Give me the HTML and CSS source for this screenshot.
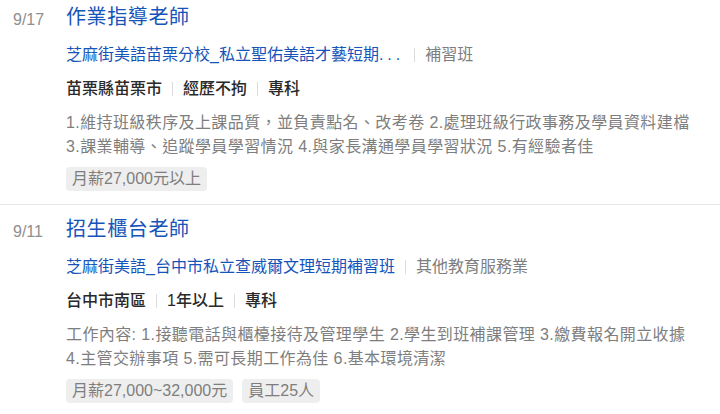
FILE: index.html
```html
<!DOCTYPE html>
<html lang="zh-Hant">
<head>
<meta charset="utf-8">
<title>職缺列表</title>
<link rel="stylesheet" href="styles.css">
</head>
<body>
<div class="list">
  <article class="job">
    <div class="date">9/17</div>
    <div class="body">
      <h2 class="title">作業指導老師</h2>
      <div class="company">
        <span class="cname">芝麻街美語苗栗分校_私立聖佑美語才藝短期<span class="dots">...</span></span>
        <span class="industry">補習班</span>
      </div>
      <ul class="info">
        <li>苗栗縣苗栗市</li>
        <li>經歷不拘</li>
        <li>專科</li>
      </ul>
      <p class="desc">1.維持班級秩序及上課品質，並負責點名、改考卷 2.處理班級行政事務及學員資料建檔 3.課業輔導、追蹤學員學習情況 4.與家長溝通學員學習狀況 5.有經驗者佳</p>
      <div class="tags">
        <span class="tag">月薪27,000元以上</span>
      </div>
    </div>
  </article>
  <article class="job">
    <div class="date">9/11</div>
    <div class="body">
      <h2 class="title">招生櫃台老師</h2>
      <div class="company">
        <span class="cname">芝麻街美語_台中市私立查威爾文理短期補習班</span>
        <span class="industry">其他教育服務業</span>
      </div>
      <ul class="info">
        <li>台中市南區</li>
        <li>1年以上</li>
        <li>專科</li>
      </ul>
      <p class="desc">工作內容: 1.接聽電話與櫃檯接待及管理學生 2.學生到班補課管理 3.繳費報名開立收據 4.主管交辦事項 5.需可長期工作為佳 6.基本環境清潔</p>
      <div class="tags">
        <span class="tag">月薪27,000~32,000元</span>
        <span class="tag">員工25人</span>
      </div>
    </div>
  </article>
</div>
</body>
</html>
```
FILE: styles.css
```css
* { box-sizing: border-box; }
html, body {
  margin: 0;
  padding: 0;
  background: #fff;
  font-family: "Liberation Sans", "Noto Sans CJK TC", sans-serif;
  font-size: 16px;
  color: #292929;
}
.list {
  margin-top: -7px;
}
.job {
  display: flex;
  padding: 10px 24px 13px 0;
  border-bottom: 1px solid #e6e6e6;
}
.date {
  width: 66px;
  flex: none;
  padding-left: 13px;
  padding-top: 3px;
  line-height: 28px;
  color: #8f8f8f;
  font-size: 16px;
}
.body {
  flex: 1;
  min-width: 0;
}
.title {
  margin: 0;
  font-size: 20px;
  line-height: 28px;
  font-weight: normal;
  letter-spacing: 0.6px;
  color: #1654b9;
}
.company {
  display: flex;
  align-items: center;
  margin-top: 12px;
  line-height: 24px;
  white-space: nowrap;
}
.cname {
  color: #1654b9;
}
.dots {
  letter-spacing: 4px;
}
.industry {
  color: #7e7e7e;
  padding-left: 10px;
  margin-left: 10px;
  border-left: 1px solid #dcdcdc;
  line-height: 14px;
}
.info {
  display: flex;
  list-style: none;
  margin: 10px 0 0;
  padding: 0;
  line-height: 24px;
  font-weight: 500;
  color: #292929;
}
.info li {
  display: flex;
  align-items: center;
}
.info li + li::before {
  content: "";
  display: block;
  width: 1px;
  height: 14px;
  background: #dcdcdc;
  margin: 0 10px;
}
.desc {
  margin: 10px 0 0;
  line-height: 24px;
  letter-spacing: 0.4px;
  color: #7e7e7e;
}
.tags {
  display: flex;
  gap: 9px;
  margin-top: 8px;
}
.tag {
  display: inline-block;
  height: 24px;
  line-height: 24px;
  padding: 0 6px;
  border-radius: 4px;
  background: #eeeeee;
  color: #7e7e7e;
}
```
